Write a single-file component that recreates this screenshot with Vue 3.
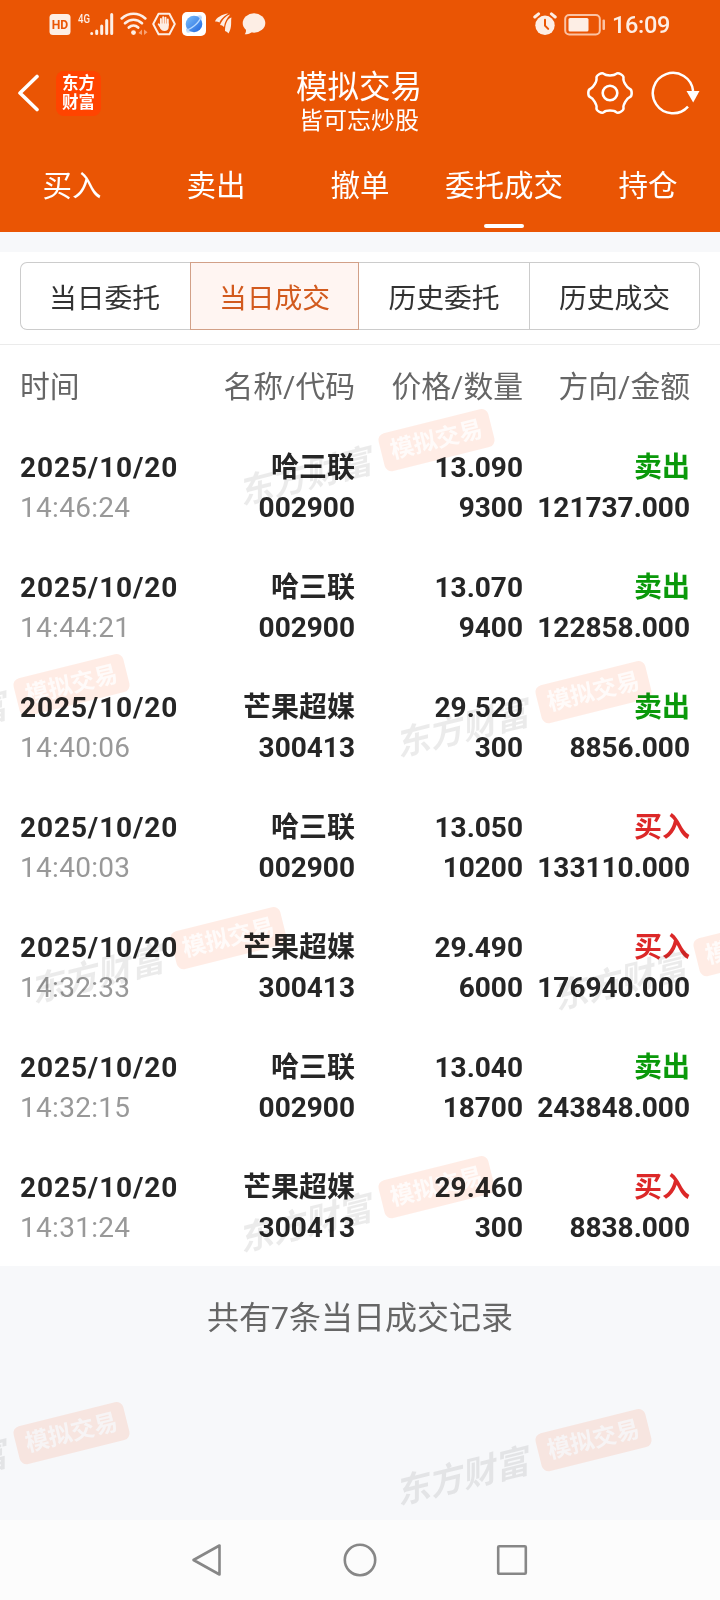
<template>
  <div class="screen">
    <header class="header">
      <!-- Status bar -->
      <div class="status">
        <div class="status__left">
          <svg class="icon-hd" width="22" height="22" viewBox="0 0 22 22">
            <rect x="0.5" y="0" width="21" height="21" rx="3.5" fill="#fdeee5" />
            <text x="11" y="15.3" text-anchor="middle" class="hd-text" textLength="16.5" lengthAdjust="spacingAndGlyphs">HD</text>
          </svg>
          <svg class="icon-signal" width="36" height="24" viewBox="0 0 36 24">
            <text x="0" y="10.6" class="net-text" textLength="12" lengthAdjust="spacingAndGlyphs">4G</text>
            <g stroke="#fdeee5" stroke-width="3" stroke-linecap="round">
              <path d="M13.700 21.400v.2M18.700 19v2.600M23.700 14v7.600M28.700 8.500v13.100M33.700 2.500v19.100" />
            </g>
          </svg>
          <svg class="icon-wifi" width="28" height="24" viewBox="0 0 28 24">
            <g fill="none" stroke="#fdeee5" stroke-width="2.700" stroke-linecap="round">
              <path d="M1.700 6.400C8.700.2 18.300.2 25.300 6.400" />
              <path d="M5 11.200c5-4.600 12-4.600 17 0" />
              <path d="M8.800 15.600c2.800-2.600 6.600-2.600 9.400 0" />
            </g>
            <circle cx="13.500" cy="20.600" r="2.400" fill="#fdeee5" />
            <path d="M18.500 21l3.500-3.500V23zM24 17.500V23l3.500-2.800z" fill="#f6a274" />
          </svg>
          <svg class="icon-hand" width="24" height="24" viewBox="0 0 24 24">
            <path d="M6.600 1.800h10.800L22.800 12l-5.400 10.200H6.600L1.200 12z" fill="none" stroke="#fdeee5" stroke-width="2" stroke-linejoin="round" />
            <g stroke="#fdeee5" stroke-width="1.900" stroke-linecap="round" fill="none">
              <path d="M8.900 13V7M11.200 12V5.200M13.500 12V5.600M15.800 13V7.400M6.700 12.300l2.400 3.400" />
            </g>
            <path d="M8 11.500h8.700v3.200c0 3-1.800 4.300-4.200 4.300-2.300 0-3.400-.9-4.500-3z" fill="#fdeee5" />
          </svg>
          <svg class="icon-browser" width="24" height="24" viewBox="0 0 24 24">
            <defs>
              <linearGradient id="globe" x1="0" y1="0" x2="1" y2="1">
                <stop offset="0" stop-color="#7cc0fb" />
                <stop offset="1" stop-color="#1f64dd" />
              </linearGradient>
            </defs>
            <rect width="24" height="24" rx="5" fill="#fff" />
            <ellipse cx="12" cy="12" rx="11" ry="4.200" transform="rotate(-48 12 12)" fill="#c3dcfa" />
            <circle cx="12" cy="12" r="8.300" fill="url(#globe)" />
            <path d="M4.200 17.600c3.800.6 13-6.500 14.600-12.600" fill="none" stroke="#b5d8ff" stroke-width="1.300" />
          </svg>
          <svg class="icon-wing" width="18" height="22" viewBox="0 0 18 22">
            <g fill="#fdeee5">
              <path d="M0 8.500C1 5 7 1 13.500.5 10 2.500 5.500 6 4.500 9.500 3 8.500 1.500 8.300 0 8.500z" />
              <path d="M5 12C7 7 11 2.500 15.200 1.500 12 5 9.500 9 9 14 7.800 12.800 6.600 12.200 5 12z" />
              <path d="M10 18C10 11 12.500 5.500 16.500 4.500 15.500 8 17.500 14 13.500 20.500 12.800 19.300 11.500 18.400 10 18z" />
            </g>
          </svg>
          <svg class="icon-chat" width="24" height="24" viewBox="0 0 24 24">
            <ellipse cx="12" cy="11" rx="11.300" ry="9.700" fill="#fdeee5" />
            <path d="M3.500 16c1 2.500.5 4.500-.8 6.300 3 0 6-.8 7.800-2.800z" fill="#fdeee5" />
          </svg>
        </div>
        <div class="status__right">
          <svg width="24" height="24" viewBox="0 0 24 24">
            <circle cx="12" cy="13.300" r="9.700" fill="#fdeee5" />
            <path d="M1.800 5 5.600 1.900M22.200 5l-3.800-3.100" stroke="#fdeee5" stroke-width="3" stroke-linecap="round" />
            <path d="M12 7.800v5.800l3.200 3.300" fill="none" stroke="#ea5504" stroke-width="2" stroke-linecap="round" />
          </svg>
          <svg class="icon-battery" width="42" height="22" viewBox="0 0 42 22">
            <rect x="1.200" y="1" width="34.600" height="19.500" rx="4" fill="none" stroke="#fbc3a4" stroke-width="2" />
            <rect x="4.500" y="4" width="20" height="13.500" rx="1.500" fill="#fdeee5" />
            <rect x="38.500" y="5.500" width="2.500" height="10.500" rx="1" fill="#fbc3a4" />
          </svg>
          <span class="clock">16:09</span>
        </div>
      </div>

      <!-- Title bar -->
      <div class="titlebar">
        <div class="titlebar__left">
          <svg width="22" height="40" viewBox="0 0 22 40">
            <path d="M19 3.500 2 20l17 16.500" fill="none" stroke="#fff" stroke-width="3.600" stroke-linecap="round" stroke-linejoin="round" />
          </svg>
          <div class="logo"><span>东方</span><span>财富</span></div>
        </div>
        <div class="titlebar__center">
          <h1>模拟交易</h1>
          <p>皆可忘炒股</p>
        </div>
        <div class="titlebar__right">
          <svg width="46" height="46" viewBox="-23 -23 46 46" fill="none" stroke="#fff">
            <path :d="gearPath" stroke-width="2.500" stroke-linejoin="round" />
            <circle r="7.300" stroke-width="2.600" />
          </svg>
          <svg width="50" height="46" viewBox="-23 -23 50 46" fill="none">
            <path d="M15 13.600A20.200 20.200 0 1 1 20.100-2" stroke="#fff" stroke-width="2.500" />
            <path d="M13.500-2h13l-6.300 11.500z" fill="#fff" />
          </svg>
        </div>
      </div>

      <nav class="tabs">
        <button
          v-for="tab in tabs"
          :key="tab"
          type="button"
          class="tab"
          :class="{ 'tab--active': tab === activeTab }"
          @click="activeTab = tab"
        >
          {{ tab }}
        </button>
      </nav>
    </header>

    <main class="body">
      <div class="segment-wrap">
        <div class="segment">
          <button
            v-for="seg in segments"
            :key="seg"
            type="button"
            class="segment__item"
            :class="{ 'segment__item--active': seg === activeSegment }"
            @click="activeSegment = seg"
          >
            {{ seg }}
          </button>
        </div>
      </div>

      <div class="list">
        <div class="list__head">
          <span>时间</span>
          <span>名称/代码</span>
          <span>价格/数量</span>
          <span>方向/金额</span>
        </div>
        <div v-for="row in rows" :key="row.time" class="list__row">
          <div class="cell">
            <span class="date">2025/10/20</span>
            <span class="time">{{ row.time }}</span>
          </div>
          <div class="cell">
            <span>{{ row.name }}</span>
            <span>{{ row.code }}</span>
          </div>
          <div class="cell">
            <span>{{ row.price }}</span>
            <span>{{ row.qty }}</span>
          </div>
          <div class="cell">
            <span :class="row.side === '买入' ? 'buy' : 'sell'">{{ row.side }}</span>
            <span>{{ row.amount }}</span>
          </div>
        </div>
      </div>

      <p class="summary">共有{{ rows.length }}条当日成交记录</p>
    </main>

    <footer class="sysnav">
      <svg width="34" height="36" viewBox="0 0 34 36">
        <path d="M28.500 3.500v29L2.500 18z" />
      </svg>
      <svg width="36" height="36" viewBox="0 0 36 36">
        <circle cx="18" cy="18" r="15.200" />
      </svg>
      <svg width="34" height="36" viewBox="0 0 34 36">
        <rect x="3.200" y="4.200" width="27.600" height="27.600" rx="1" />
      </svg>
    </footer>

    <!-- Watermark layer -->
    <div class="marks">
      <div
        v-for="(m, i) in marks"
        :key="i"
        class="mark"
        :style="{ left: m[0] + 'px', top: m[1] + 'px' }"
      >
        <span class="mark__brand">东方财富</span>
        <span class="mark__pill">模拟交易</span>
      </div>
    </div>
  </div>
</template>

<script setup>
import { ref } from 'vue';

const tabs = ['买入', '卖出', '撤单', '委托成交', '持仓'];
const activeTab = ref('委托成交');

const segments = ['当日委托', '当日成交', '历史委托', '历史成交'];
const activeSegment = ref('当日成交');

const rows = [
  { time: '14:46:24', name: '哈三联', code: '002900', price: '13.090', qty: '9300', side: '卖出', amount: '121737.000' },
  { time: '14:44:21', name: '哈三联', code: '002900', price: '13.070', qty: '9400', side: '卖出', amount: '122858.000' },
  { time: '14:40:06', name: '芒果超媒', code: '300413', price: '29.520', qty: '300', side: '卖出', amount: '8856.000' },
  { time: '14:40:03', name: '哈三联', code: '002900', price: '13.050', qty: '10200', side: '买入', amount: '133110.000' },
  { time: '14:32:33', name: '芒果超媒', code: '300413', price: '29.490', qty: '6000', side: '买入', amount: '176940.000' },
  { time: '14:32:15', name: '哈三联', code: '002900', price: '13.040', qty: '18700', side: '卖出', amount: '243848.000' },
  { time: '14:31:24', name: '芒果超媒', code: '300413', price: '29.460', qty: '300', side: '买入', amount: '8838.000' },
];

// centre of each pill
const marks = [
  [437, 440],
  [71.5, 685],
  [593.5, 692],
  [229, 938],
  [752, 945],
  [437, 1187],
  [71.5, 1432.5],
  [593.5, 1439.5],
];

// six blunt teeth, control points joined with midpoint quadratics
const gearPath = (() => {
  const sector = [[-20.5, 22], [-14.5, 18.2], [14.5, 18.2], [20.5, 22]];
  const pts = [];
  for (let i = 0; i < 6; i++) {
    for (const [deg, r] of sector) {
      const a = ((i * 60 - 90 + deg) * Math.PI) / 180;
      pts.push([r * Math.cos(a), r * Math.sin(a)]);
    }
  }
  const mid = (p, q) => `${((p[0] + q[0]) / 2).toFixed(2)} ${((p[1] + q[1]) / 2).toFixed(2)}`;
  let d = `M${mid(pts[pts.length - 1], pts[0])}`;
  pts.forEach((p, i) => {
    d += `Q${p[0].toFixed(2)} ${p[1].toFixed(2)} ${mid(p, pts[(i + 1) % pts.length])}`;
  });
  return d + 'z';
})();
</script>

<style>
body {
  margin: 0;
}
</style>

<style scoped>
.screen {
  position: relative;
  display: flex;
  flex-direction: column;
  width: 720px;
  height: 1600px;
  overflow: hidden;
  background: #f7f8fa;
  font-family: Roboto, 'Noto Sans CJK SC', sans-serif;
  color: #262626;
}

button {
  padding: 0;
  border: none;
  background: none;
  font-family: inherit;
  color: inherit;
}

svg {
  display: block;
  flex-shrink: 0;
}

/* ── Header ── */
.header {
  display: flex;
  flex-direction: column;
  height: 232px;
  background: #ea5504;
  color: #fff;
}

.status {
  display: flex;
  justify-content: space-between;
  height: 48px;
  padding: 0 50px 0 49px;
}

.status__left,
.status__right {
  display: flex;
  align-items: center;
}

.icon-hd {
  margin-top: 2px;
}

.icon-signal {
  margin-left: 7px;
}

.icon-wifi {
  margin-left: 6px;
}

.icon-hand {
  margin-left: 4px;
}

.icon-browser {
  margin-left: 6px;
}

.icon-wing {
  margin-left: 9px;
}

.icon-chat {
  margin-left: 9px;
}

.hd-text {
  font-size: 13.5px;
  font-weight: 700;
  fill: #ea5504;
}

.net-text {
  font-size: 13px;
  font-weight: 500;
  fill: #fdeee5;
}

.icon-battery {
  margin-top: 1px;
  margin-left: 7px;
}

.clock {
  margin-left: 6px;
  padding-top: 2px;
  font-size: 23.5px;
  font-weight: 500;
  line-height: 28px;
  letter-spacing: -0.3px;
  color: #fdeee5;
}

.titlebar {
  display: grid;
  grid-template-columns: 1fr auto 1fr;
  align-items: center;
  height: 90px;
  padding: 0 20px 0 18px;
}

.titlebar__left {
  display: flex;
  align-items: center;
  gap: 16px;
}

.logo {
  display: flex;
  flex-direction: column;
  justify-content: center;
  width: 45px;
  height: 45px;
  border-radius: 8px;
  background: #ff4400;
  text-align: center;
  font-size: 16.5px;
  font-weight: 700;
  line-height: 19px;
}

.titlebar__center {
  padding-top: 19px;
  text-align: center;
}

.titlebar__center h1 {
  margin: 0;
  font-size: 31.5px;
  font-weight: 400;
  line-height: 36px;
}

.titlebar__center p {
  margin: 0;
  font-size: 24px;
  line-height: 30px;
}

.titlebar__right {
  display: flex;
  justify-content: flex-end;
  gap: 17px;
}

.tabs {
  display: grid;
  grid-template-columns: repeat(5, 1fr);
  flex: 1;
}

.tab {
  position: relative;
  padding-bottom: 4px;
  font-size: 29.5px;
}

.tab--active::after {
  content: '';
  position: absolute;
  left: 50%;
  bottom: 4px;
  width: 40px;
  height: 4px;
  margin-left: -20px;
  border-radius: 2px;
  background: #fff;
}

/* ── Segments ── */
.body {
  flex: 1;
  padding-top: 20px;
}

.segment-wrap {
  padding: 10px 20px 14px;
  border-bottom: 1px solid #ebebeb;
  background: #fff;
}

.segment {
  display: grid;
  grid-template-columns: 170px 169px 171px 170px;
  height: 68px;
}

.segment__item {
  border: 1px solid #ccc;
  border-left-width: 0;
  font-size: 27.8px;
  color: #333;
}

.segment__item:first-child {
  padding-right: 2px;
  border-right-width: 0;
  border-left-width: 1px;
  border-radius: 7px 0 0 7px;
}

.segment__item:last-child {
  border-radius: 0 7px 7px 0;
}

.segment__item--active {
  border-left-width: 1px;
  border-color: #d2a088;
  background: #fff5f2;
  color: #d25a1e;
}

/* ── List ── */
.list {
  background: #fff;
}

.list__head,
.list__row {
  display: grid;
  grid-template-columns: 180px 155px 168px 167px;
  padding: 0 30px 0 20px;
}

.list__head {
  align-items: center;
  height: 81px;
  font-size: 29.8px;
  color: #666;
}

.list__head span {
  padding-bottom: 3px;
  text-align: right;
  white-space: nowrap;
}

.list__head span:first-child {
  text-align: left;
}

.list__row {
  height: 116px;
  padding-top: 4px;
  align-items: center;
  font-size: 28px;
  font-weight: 700;
  line-height: 40px;
}

.cell {
  display: flex;
  flex-direction: column;
  align-items: flex-end;
  white-space: nowrap;
}

.cell:first-child {
  align-items: flex-start;
}

.date {
  letter-spacing: 0.9px;
}

.time {
  font-weight: 400;
  letter-spacing: 0.3px;
  color: #999;
}

.buy {
  color: #dc2828;
}

.sell {
  color: #0a990a;
}

.summary {
  margin: 32px 0 0;
  text-align: center;
  font-size: 32px;
  line-height: 40px;
  color: #666;
}

/* ── System navigation ── */
.sysnav {
  display: flex;
  justify-content: center;
  align-items: center;
  gap: 117px;
  height: 80px;
  background: #fcfcfc;
}

.sysnav svg {
  fill: none;
  stroke: #878787;
  stroke-width: 2.6;
  stroke-linejoin: round;
}

/* ── Watermark ── */
.marks {
  position: absolute;
  inset: 0;
  overflow: hidden;
  pointer-events: none;
  mix-blend-mode: multiply;
}

.mark {
  position: absolute;
  display: flex;
  align-items: center;
  gap: 12px;
  white-space: nowrap;
  transform: translate(-100%, -50%) translateX(56px) rotate(-14deg);
  transform-origin: calc(100% - 56px) 50%;
}

.mark__brand {
  padding-top: 7px;
  font-size: 34px;
  font-weight: 700;
  font-style: italic;
  line-height: 40px;
  color: rgba(0, 0, 0, 0.08);
}

.mark__pill {
  width: 113px;
  height: 39px;
  border-radius: 7px;
  background: rgba(255, 85, 20, 0.11);
  text-align: center;
  font-size: 23.5px;
  font-weight: 700;
  line-height: 38px;
  color: rgba(255, 255, 255, 0.8);
}
</style>
